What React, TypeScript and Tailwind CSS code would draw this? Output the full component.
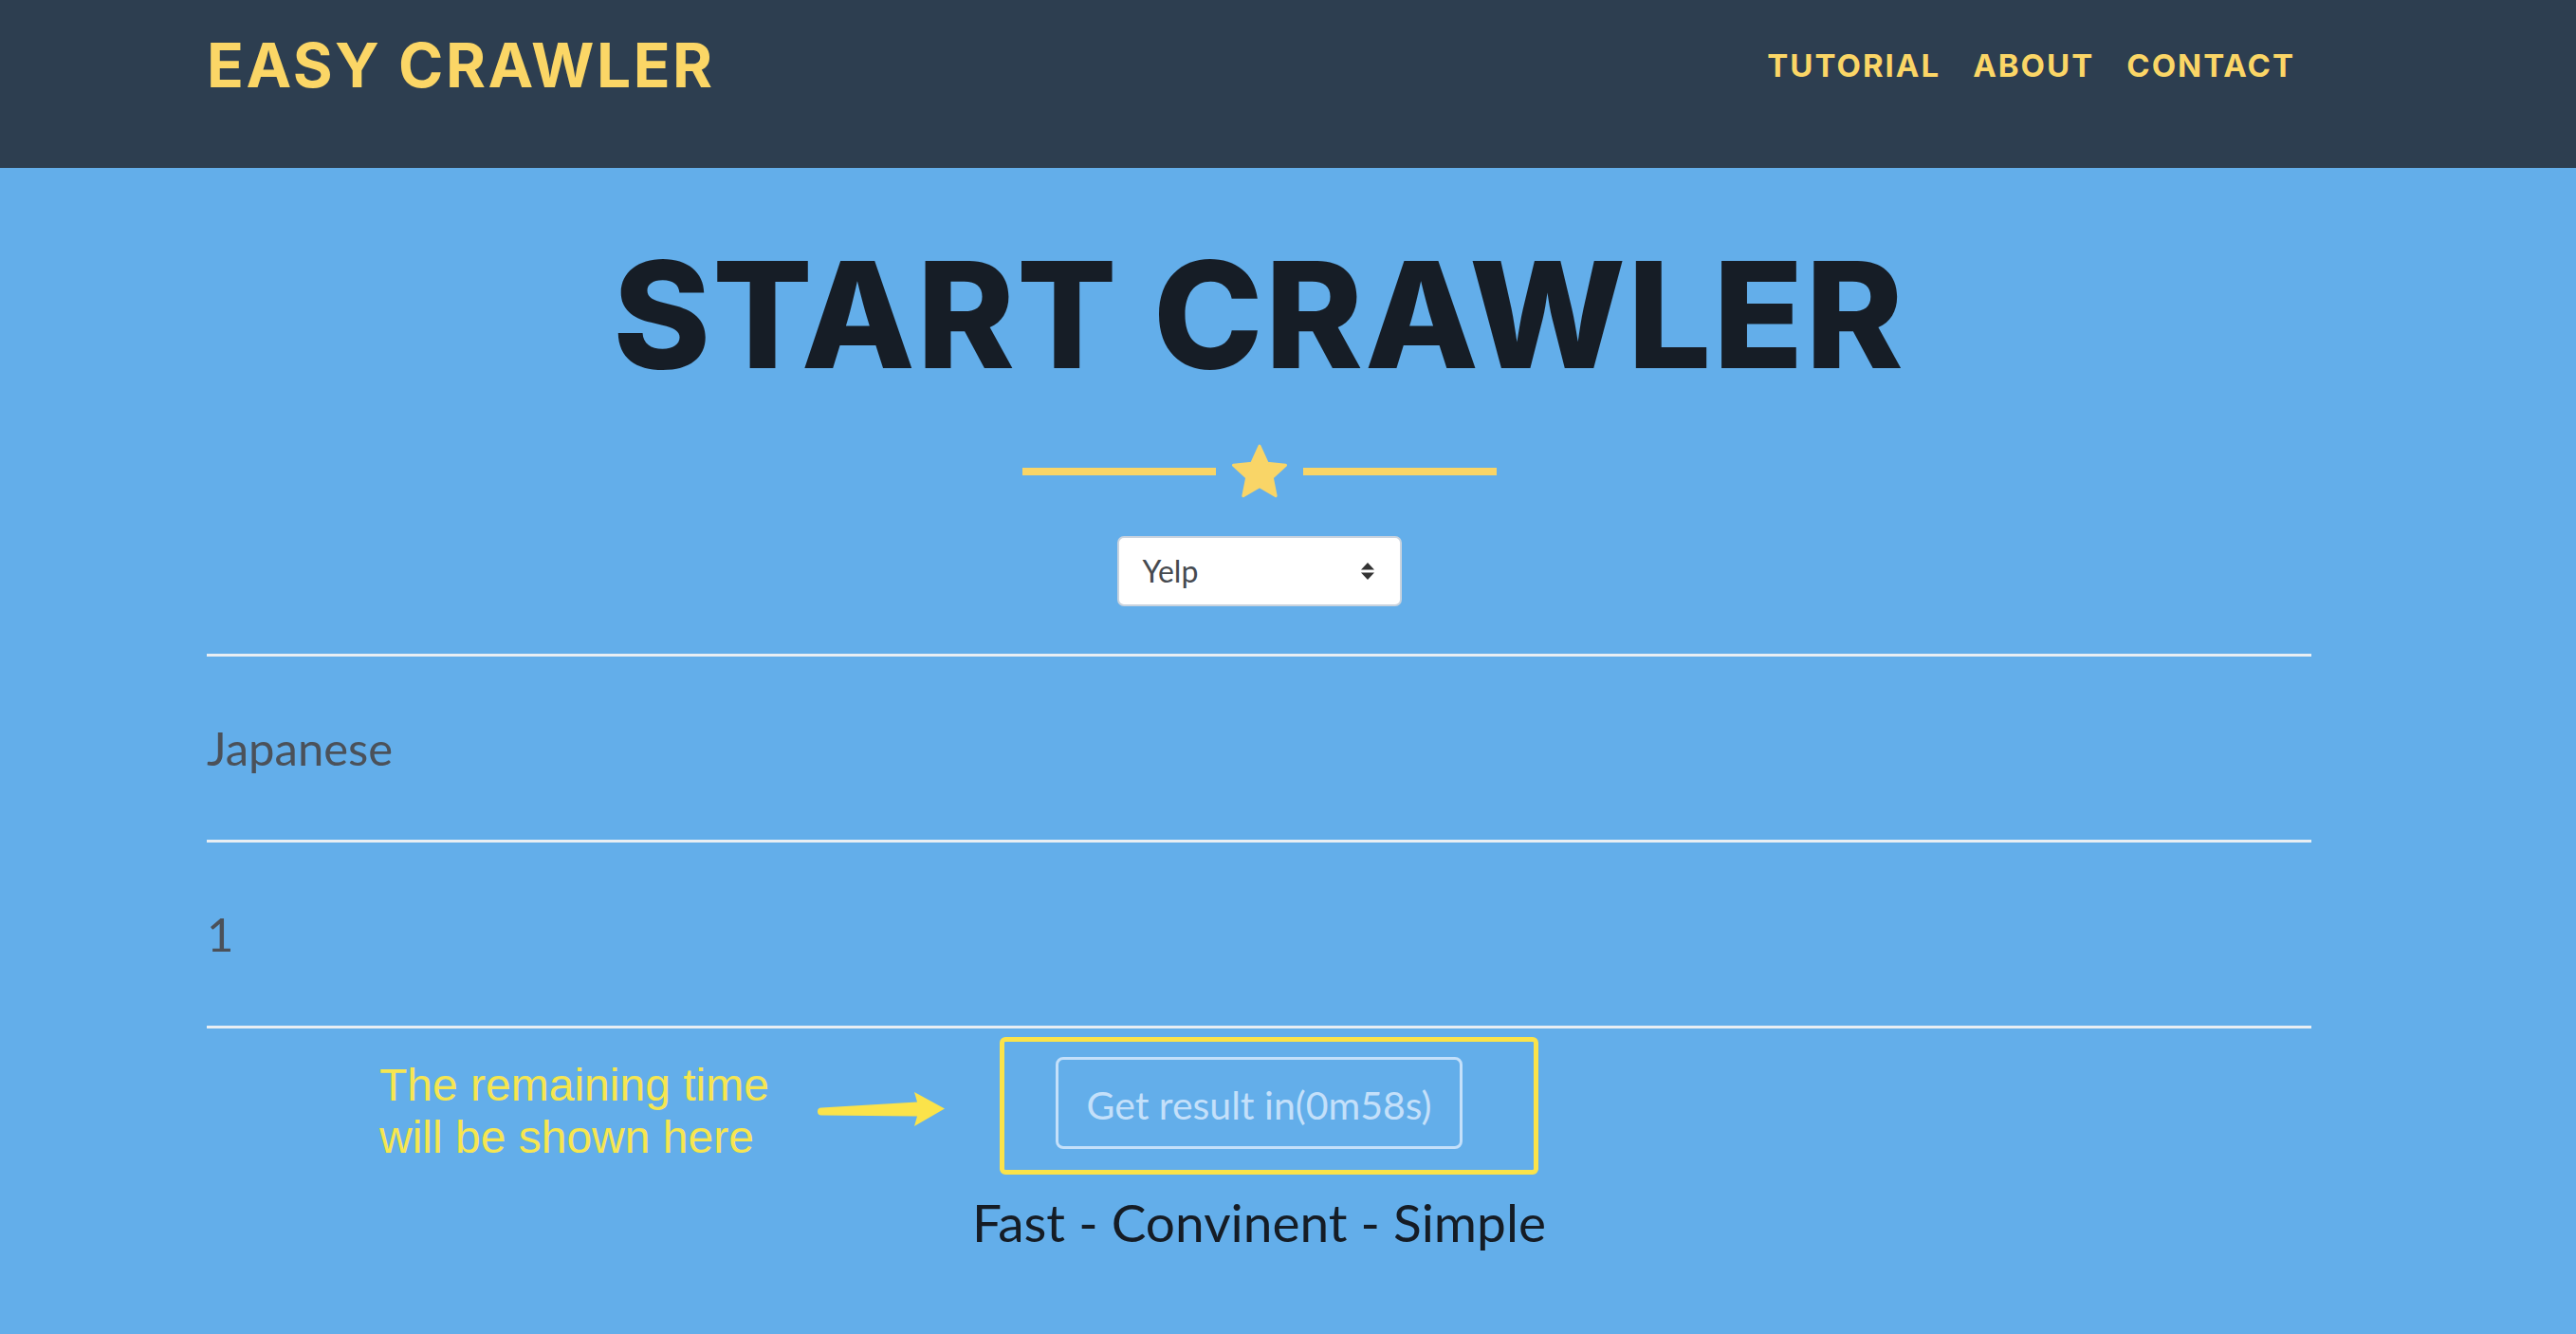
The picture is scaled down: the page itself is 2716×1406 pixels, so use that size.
import React from 'react';

const heading = { fontFamily: 'Inter, "Liberation Sans", sans-serif' };
const body = { fontFamily: 'Lato, "Liberation Sans", sans-serif' };

function StarDivider() {
  return (
    <div className="flex items-center gap-[15px]">
      <div className="h-[8px] w-[204px] bg-[#f9d567]" />
      <svg width="62" height="60" viewBox="0 0 62 58" className="block">
        <polygon
          points="31,2 39.2,20.2 58.5,22.3 44.3,35.3 48.2,54.7 31,44.8 13.8,54.7 17.7,35.3 3.5,22.3 22.8,20.2"
          fill="#f9d567"
          stroke="#f9d567"
          strokeWidth="3"
          strokeLinejoin="round"
        />
      </svg>
      <div className="h-[8px] w-[204px] bg-[#f9d567]" />
    </div>
  );
}

function SiteSelect() {
  return (
    <div
      className="mt-[38px] flex h-[74px] w-[300px] items-center justify-between rounded-[7px] border-2 border-[#c9d3de] bg-white pl-[25px] pr-[26px] text-[32px] text-[#464a50]"
      style={body}
    >
      <span>Yelp</span>
      <svg width="16" height="20" viewBox="0 0 16 20" className="block">
        <polygon points="8,1 15,8.5 1,8.5" fill="#333" />
        <polygon points="1,11.5 15,11.5 8,19" fill="#333" />
      </svg>
    </div>
  );
}

function FieldRow({ value }: { value: string }) {
  return (
    <>
      <div className="flex h-[193px] items-center text-[49px] text-[#4b5159]" style={body}>
        {value}
      </div>
      <div className="h-[3px] w-full bg-[#e8eef3]" />
    </>
  );
}

function Arrow() {
  return (
    <svg width="136" height="40" viewBox="0 0 136 40" className="block">
      <path
        d="M5,18.5 L106,12.5 L103,2 L135,19.5 L103,38 L106,27.5 L5,26.5 A4,4 0 0 1 5,18.5 Z"
        fill="#fbe34a"
      />
    </svg>
  );
}

export default function App() {
  return (
    <div className="min-h-screen w-full bg-[#63aeea]">
      <header className="h-[177px] w-full bg-[#2d3e50]">
        <div className="ml-[218px] flex h-[138px] w-[2219px] items-center justify-between">
          <a
            className="text-[64px] font-bold leading-none tracking-[2.5px] text-[#fbd666]"
            style={heading}
          >
            EASY CRAWLER
          </a>
          <nav className="flex">
            {['TUTORIAL', 'ABOUT', 'CONTACT'].map((item) => (
              <a
                key={item}
                className="px-[17px] text-[33px] font-bold leading-none tracking-[2px] text-[#fbd666]"
                style={heading}
              >
                {item}
              </a>
            ))}
          </nav>
        </div>
      </header>

      <main className="ml-[218px] flex w-[2219px] flex-col">
        <div className="flex flex-col items-center">
          <h1
            className="mt-[77px] text-[156px] font-extrabold leading-none tracking-[2px] text-[#161d26]"
            style={heading}
          >
            START CRAWLER
          </h1>
          <div className="mt-[57px]">
            <StarDivider />
          </div>
          <SiteSelect />
        </div>

        <div className="mt-[50px] h-[3px] w-full bg-[#e8eef3]" />
        <FieldRow value="Japanese" />
        <FieldRow value="1" />

        <div className="flex flex-col items-center">
          <div className="relative mt-[30px]">
            <button
              className="flex h-[97px] w-[429px] items-center justify-center rounded-[8px] border-[3px] border-[#c4e0fa] pt-[5px] text-[41px] text-[#c4e0fa]"
              style={body}
            >
              Get result in(0m58s)
            </button>
            {/* annotation overlay */}
            <div className="pointer-events-none absolute left-[-59px] top-[-21px] h-[145px] w-[568px] rounded-[6px] border-[5px] border-[#fbe34a]" />
            <div className="absolute left-[-252px] top-[35px]">
              <Arrow />
            </div>
            <div
              className="absolute left-[-713px] top-[2px] whitespace-nowrap text-[48px] leading-[55px] text-[#f6e650]"
              style={{ fontFamily: '"Liberation Sans", Arial, sans-serif' }}
            >
              The remaining time
              <br />
              will be shown here
            </div>
          </div>
          <p className="mt-[50px] text-[55px] leading-none text-[#151c25]" style={body}>
            Fast - Convinent - Simple
          </p>
        </div>
      </main>
    </div>
  );
}
